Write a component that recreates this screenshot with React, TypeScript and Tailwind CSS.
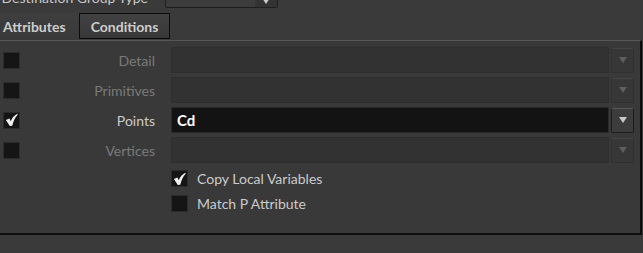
import { ReactNode } from 'react';

const font = { fontFamily: 'Lato, "Noto Sans", sans-serif' };

const Check = () => (
  <svg viewBox="0 0 16 16" className="w-[16px] h-[16px]">
    <path d="M2 8 L5.8 6.4 L7.2 9.2 C8.8 5.8 10.8 3.2 14.2 1.4 L14.6 2.4 C12 5 10.2 8.8 8.8 14.2 L6.2 14.4 Z" fill="#f0f0f0" />
  </svg>
);

const Box = ({ checked }: { checked?: boolean }) => (
  <div className="w-[17px] h-[17px] bg-[#151515] border border-[#2b2b2b] flex items-center justify-center shrink-0">
    {checked && <Check />}
  </div>
);

const Arrow = ({ on }: { on?: boolean }) => (
  <svg viewBox="0 0 10 8" className="w-[10px] h-[8px]">
    <path d="M1 1 H9 L5 7 Z" fill={on ? '#c8c8c8' : '#5e5e5e'} />
  </svg>
);

const Row = ({ label, on, value }: { label: string; on?: boolean; value?: ReactNode }) => (
  <div className="flex items-center h-[26px]">
    <div className="w-[171px] flex items-center pl-[3px]">
      <Box checked={on} />
      <div className={`flex-1 text-right pr-[16px] text-[14px] ${on ? 'text-[#cbcbcb]' : 'text-[#7a7a7a]'}`}>{label}</div>
    </div>
    <div
      className={`w-[438px] h-[26px] flex items-center pl-[5px] ${
        on ? 'bg-[#131313] border border-[#2a2a2a] text-white font-bold text-[15px]' : 'bg-[#323232] border border-[#2e2e2e]'
      }`}
    >
      {value}
    </div>
    <div
      className={`ml-[2px] w-[23px] h-[25px] flex items-center justify-center rounded-[2px] ${
        on ? 'bg-[#3c3c3c] border border-[#1c1c1c] border-t-[#555]' : 'bg-[#373737] border border-[#303030] border-t-[#444]'
      }`}
    >
      <Arrow on={on} />
    </div>
  </div>
);

export default function App() {
  return (
    <div className="w-[643px] h-[253px] overflow-hidden bg-[#3a3a3a] text-[#c8c8c8]" style={font}>
      <div className="h-[13px] overflow-hidden">
        <div className="flex items-center h-[22px] -mt-[14px]">
          <div className="w-[148px] text-right text-[14px] text-[#c8c8c8]">Destination Group Type</div>
          <div className="ml-[17px] w-[113px] h-[22px] flex bg-[#3c3c3c] border border-[#1e1e1e] rounded-[2px]">
            <div className="flex-1" />
            <div className="w-[22px] bg-[#333] flex items-end justify-center pb-[2px]">
              <Arrow on />
            </div>
          </div>
        </div>
      </div>
      <div className="flex h-[27px] items-stretch">
        <div className="w-[79px] pl-[3px] flex items-center text-[14px] font-bold text-[#cdcdcd] bg-gradient-to-b from-[#3e3e3e] to-[#393939]">
          Attributes
        </div>
        <div className="w-[91px] h-[26px] border border-[#0c0c0c] flex items-center justify-center text-[14px] font-bold text-[#cdcdcd] bg-gradient-to-b from-[#424242] to-[#373737]">
          Conditions
        </div>
      </div>
      <div className="border-t border-[#575757] h-[195px] mr-[1px] border-r-2 border-r-[#0d0d0d] border-b-2 border-b-[#0d0d0d] bg-[#393939]">
        <div className="pt-[6px] flex flex-col gap-[4px]">
          <Row label="Detail" />
          <Row label="Primitives" />
          <Row label="Points" on value="Cd" />
          <Row label="Vertices" />
        </div>
        <div className="pl-[171px] pt-[7px] flex flex-col gap-[8px] text-[14px] text-[#cbcbcb]">
          <div className="flex items-center gap-[9px] h-[17px]">
            <Box checked />
            <span>Copy Local Variables</span>
          </div>
          <div className="flex items-center gap-[9px] h-[17px]">
            <Box />
            <span>Match P Attribute</span>
          </div>
        </div>
      </div>
    </div>
  );
}
